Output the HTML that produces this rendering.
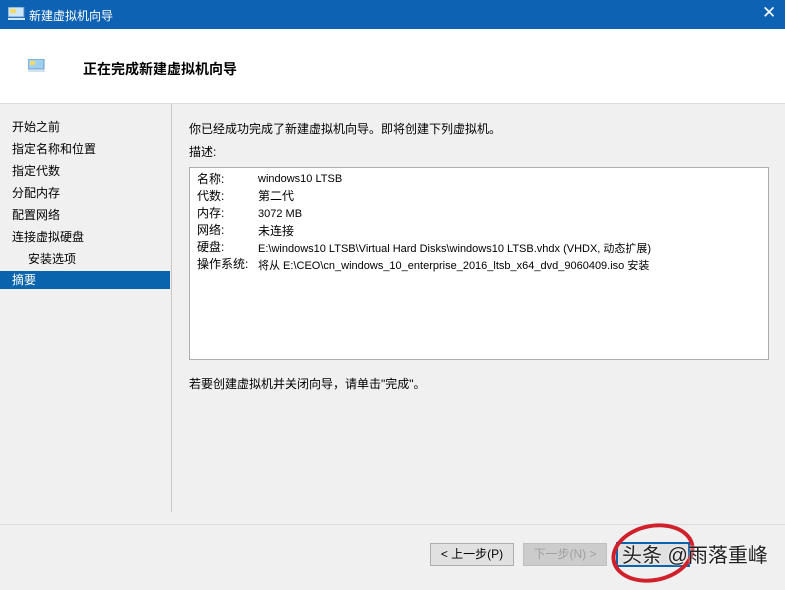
<!DOCTYPE html>
<html><head><meta charset="utf-8"><style>
body{margin:0;width:785px;height:581px;overflow:hidden;background:#f0f0f0;font-family:"Liberation Sans","Noto Sans CJK SC",sans-serif;font-size:12px;color:#000;position:relative}
.a{position:absolute}
.title{left:0;top:0;width:785px;height:29px;background:#0d62b4;color:#fff}
.hdr{left:0;top:29px;width:785px;height:74px;background:#fff;border-bottom:1px solid #dcdcdc}
.nav div{position:absolute;left:12px;height:18px;line-height:18px;font-size:12px}
.btn{position:absolute;top:543px;height:21px;border:1px solid #adadad;background:#e1e1e1;text-align:center;line-height:20px;font-size:12px}
</style></head><body>
<div class="a title">
 <svg class="a" style="left:8px;top:7px" width="17" height="14"><rect x="0" y="0" width="16" height="10" fill="#cfe6f7" stroke="#5a8fc0"/><rect x="2" y="2" width="6" height="4" fill="#f4d86a"/><rect x="0" y="11" width="17" height="2" fill="#cfe6f7"/></svg>
 <div class="a" style="left:29px;top:7px;font-size:12px">新建虚拟机向导</div>
 <div class="a" style="left:762px;top:3px;font-size:17px">✕</div>
</div>
<div class="a hdr">
 <svg class="a" style="left:28px;top:30px" width="17" height="14"><rect x="0" y="0" width="16" height="10" fill="#9fd0ef" stroke="#6a9cc8"/><rect x="2" y="2" width="5" height="4" fill="#f4d86a"/><rect x="0" y="11" width="17" height="2" fill="#d0e4f0"/></svg>
 <div class="a" style="left:83px;top:30px;font-size:14px;font-weight:bold">正在完成新建虚拟机向导</div>
</div>
<div class="nav">
 <div style="top:118px">开始之前</div>
 <div style="top:140px">指定名称和位置</div>
 <div style="top:162px">指定代数</div>
 <div style="top:184px">分配内存</div>
 <div style="top:206px">配置网络</div>
 <div style="top:228px">连接虚拟硬盘</div>
 <div style="top:250px;left:28px">安装选项</div>
 <div style="top:271px;left:0;width:158px;padding-left:12px;background:#0a64ad;color:#fff">摘要</div>
</div>
<div class="a" style="left:171px;top:104px;width:1px;height:408px;background:#c8c8c8"></div>
<div class="a" style="left:189px;top:120px">你已经成功完成了新建虚拟机向导。即将创建下列虚拟机。</div>
<div class="a" style="left:189px;top:143px">描述:</div>
<div class="a" style="left:189px;top:167px;width:578px;height:191px;background:#fff;border:1px solid #adadad;line-height:17px;font-size:11px">
 <div class="a" style="left:7px;top:3px;font-size:12px">名称:<br>代数:<br>内存:<br>网络:<br>硬盘:<br>操作系统:</div>
 <div class="a" style="left:68px;top:3px;white-space:nowrap">windows10 LTSB<br><span style="font-size:12px">第二代</span><br>3072 MB<br><span style="font-size:12px">未连接</span><br>E:\windows10 LTSB\Virtual Hard Disks\windows10 LTSB.vhdx (VHDX, 动态扩展)<br>将从 E:\CEO\cn_windows_10_enterprise_2016_ltsb_x64_dvd_9060409.iso 安装</div>
</div>
<div class="a" style="left:189px;top:375px">若要创建虚拟机并关闭向导，请单击"完成"。</div>
<div class="a" style="left:0;top:524px;width:785px;height:1px;background:#dcdcdc"></div>
<div class="btn" style="left:430px;width:82px">&lt; 上一步(P)</div>
<div class="btn" style="left:523px;width:82px;color:#a0a0a0;background:#cccccc;border-color:#bfbfbf">下一步(N) &gt;</div>
<div class="btn" style="left:616px;width:70px;border:2px solid #0a64ad;top:542px"></div>
<div class="a" style="left:611px;top:524px;width:76px;height:50px;border:4px solid #d0202a;border-radius:50%;transform:rotate(-12deg)"></div>
<div class="a" style="left:622px;top:539px;font-size:20px;color:#222;text-shadow:0 0 2px #fff">头条 @雨落重峰</div>
</body></html>
